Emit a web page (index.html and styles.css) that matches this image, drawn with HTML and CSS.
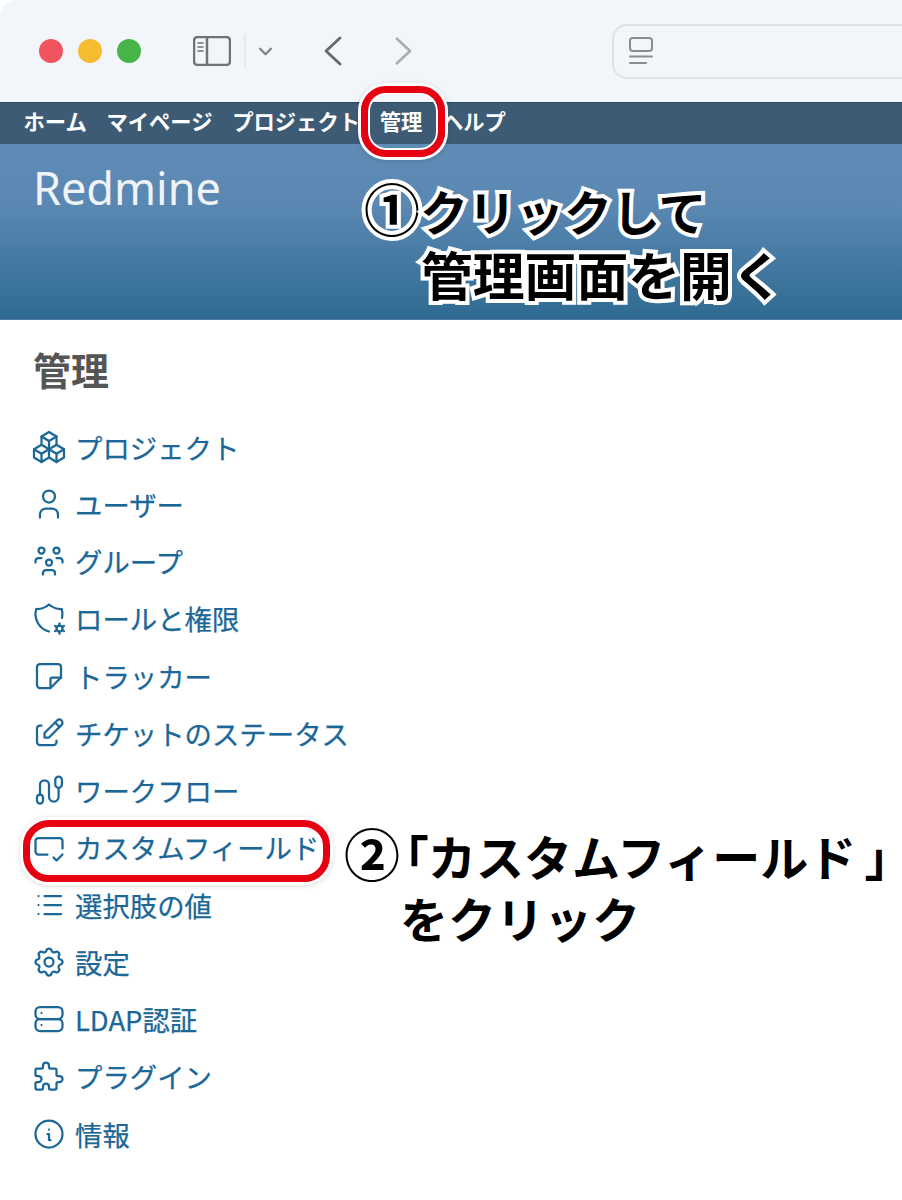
FILE: index.html
```html
<!DOCTYPE html>
<html lang="ja">
<head>
  <meta charset="UTF-8" />
  <meta name="viewport" content="width=device-width, initial-scale=1" />
  <title>Redmine 管理</title>
  <link rel="stylesheet" href="styles.css">
</head>
<body>
  <div class="page">
    <div class="toolbar">
      <div class="lights">
        <span class="light red"></span>
        <span class="light yellow"></span>
        <span class="light green"></span>
      </div>
      <svg class="tb-sidebar" viewBox="0 0 38 30">
        <rect x="1" y="1" width="36" height="28" rx="3.5" />
        <path d="M14 1v28" />
        <path class="thin" d="M5 7h5M5 11h5M5 15h5" />
      </svg>
      <span class="tb-divider"></span>
      <svg class="tb-down" viewBox="0 0 16 10"><path d="M2 2l6 6l6 -6" /></svg>
      <svg class="tb-back" viewBox="0 0 18 30"><path d="M16 2l-14 13l14 13" /></svg>
      <svg class="tb-forward" viewBox="0 0 18 30"><path d="M2 2l14 13l-14 13" /></svg>
      <div class="address">
        <svg class="tb-reader" viewBox="0 0 24 28">
          <rect x="1" y="1" width="22" height="13" rx="3" />
          <path d="M1 19.500h22M1 26h16" />
        </svg>
      </div>
    </div>

    <nav class="top-menu">
      <a>ホーム</a>
      <a>マイページ</a>
      <a>プロジェクト</a>
      <a>管理</a>
      <a>ヘルプ</a>
    </nav>

    <header class="site-header">
      <h1>Redmine</h1>
    </header>

    <main class="content">
      <h2>管理</h2>
      <ul class="admin-menu">
        <li>
          <svg class="icon" viewBox="0 0 24 24"><path d="M7 16.500l-5 -3l5 -3l5 3v5.500l-5 3z" /><path d="M2 13.500v5.500l5 3" /><path d="M7 16.545l5 -3.030" /><path d="M17 16.500l-5 -3l5 -3l5 3v5.500l-5 3z" /><path d="M12 19l5 3" /><path d="M17 16.500l5 -3" /><path d="M12 13.500v-5.500l-5 -3l5 -3l5 3v5.500" /><path d="M7 5.030v5.455" /><path d="M12 8l5 -3" /></svg>
          <span>プロジェクト</span>
        </li>
        <li>
          <svg class="icon" viewBox="0 0 24 24"><path d="M8 7a4 4 0 1 0 8 0a4 4 0 0 0 -8 0" /><path d="M6 21v-2a4 4 0 0 1 4 -4h4a4 4 0 0 1 4 4v2" /></svg>
          <span>ユーザー</span>
        </li>
        <li>
          <svg class="icon" viewBox="0 0 24 24"><path d="M10 13a2 2 0 1 0 4 0a2 2 0 0 0 -4 0" /><path d="M8 21v-1a2 2 0 0 1 2 -2h4a2 2 0 0 1 2 2v1" /><path d="M15 5a2 2 0 1 0 4 0a2 2 0 0 0 -4 0" /><path d="M17 10h2a2 2 0 0 1 2 2v1" /><path d="M5 5a2 2 0 1 0 4 0a2 2 0 0 0 -4 0" /><path d="M3 13v-1a2 2 0 0 1 2 -2h2" /></svg>
          <span>グループ</span>
        </li>
        <li>
          <svg class="icon" viewBox="0 0 24 24"><path d="M12 21a12 12 0 0 1 -8.500 -15a12 12 0 0 0 8.500 -3a12 12 0 0 0 8.500 3c.568 1.933 .635 3.957 .223 5.890" /><path d="M17 19a2 2 0 1 0 4 0a2 2 0 1 0 -4 0" /><path d="M19 15.500v1.500M19 21v1.500M22 17.250l-1.300 .750M17.300 20l-1.300 .750M16 17.250l1.300 .750M20.700 20l1.300 .750" /></svg>
          <span>ロールと権限</span>
        </li>
        <li>
          <svg class="icon" viewBox="0 0 24 24"><path d="M13 20l7 -7" /><path d="M13 20v-6a1 1 0 0 1 1 -1h6v-7a2 2 0 0 0 -2 -2h-12a2 2 0 0 0 -2 2v12a2 2 0 0 0 2 2h7" /></svg>
          <span>トラッカー</span>
        </li>
        <li>
          <svg class="icon" viewBox="0 0 24 24"><path d="M7 7h-1a2 2 0 0 0 -2 2v9a2 2 0 0 0 2 2h9a2 2 0 0 0 2 -2v-1" /><path d="M20.385 6.585a2.100 2.100 0 0 0 -2.970 -2.970l-8.415 8.385v3h3l8.385 -8.415" /><path d="M16 5l3 3" /></svg>
          <span>チケットのステータス</span>
        </li>
        <li>
          <svg class="icon" viewBox="0 0 24 24"><path d="M6 21a2 2 0 0 1 -2 -2v-2a2 2 0 0 1 4 0v2a2 2 0 0 1 -2 2z" /><path d="M6 15v-6.500a3 3 0 0 1 6 0v8a3.200 3.200 0 0 0 6.400 0v-6" /><path d="M18.400 10.500a2.200 2.200 0 0 1 -2.200 -2.200v-3.100a2.200 2.200 0 0 1 4.400 0v3.100a2.200 2.200 0 0 1 -2.200 2.200z" /></svg>
          <span>ワークフロー</span>
        </li>
        <li>
          <svg class="icon" viewBox="0 0 24 24"><path d="M11 17h-6a2 2 0 0 1 -2 -2v-7a2 2 0 0 1 2 -2h14a2 2 0 0 1 2 2v5" /><path d="M15 19l2 2l4 -4" /></svg>
          <span>カスタムフィールド</span>
        </li>
        <li>
          <svg class="icon" viewBox="0 0 24 24"><path d="M9 6h11M9 12h11M9 18h11" /><path d="M5 6v.010M5 12v.010M5 18v.010" /></svg>
          <span>選択肢の値</span>
        </li>
        <li>
          <svg class="icon" viewBox="0 0 24 24"><path d="M10.325 4.317c.426 -1.756 2.924 -1.756 3.350 0a1.724 1.724 0 0 0 2.573 1.066c1.543 -.940 3.310 .826 2.370 2.370a1.724 1.724 0 0 0 1.065 2.572c1.756 .426 1.756 2.924 0 3.350a1.724 1.724 0 0 0 -1.066 2.573c.940 1.543 -.826 3.310 -2.370 2.370a1.724 1.724 0 0 0 -2.572 1.065c-.426 1.756 -2.924 1.756 -3.350 0a1.724 1.724 0 0 0 -2.573 -1.066c-1.543 .940 -3.310 -.826 -2.370 -2.370a1.724 1.724 0 0 0 -1.065 -2.572c-1.756 -.426 -1.756 -2.924 0 -3.350a1.724 1.724 0 0 0 1.066 -2.573c-.940 -1.543 .826 -3.310 2.370 -2.370c1 .608 2.296 .070 2.572 -1.065z" /><path d="M9 12a3 3 0 1 0 6 0a3 3 0 0 0 -6 0" /></svg>
          <span>設定</span>
        </li>
        <li>
          <svg class="icon" viewBox="0 0 24 24"><path d="M3 7a3 3 0 0 1 3 -3h12a3 3 0 0 1 3 3v2a3 3 0 0 1 -3 3h-12a3 3 0 0 1 -3 -3z" /><path d="M3 15a3 3 0 0 1 3 -3h12a3 3 0 0 1 3 3v2a3 3 0 0 1 -3 3h-12a3 3 0 0 1 -3 -3z" /><path d="M7 8v.010M7 16v.010" /></svg>
          <span>LDAP認証</span>
        </li>
        <li>
          <svg class="icon" viewBox="0 0 24 24"><path d="M4 7h3a1 1 0 0 0 1 -1v-1a2 2 0 0 1 4 0v1a1 1 0 0 0 1 1h3a1 1 0 0 1 1 1v3a1 1 0 0 0 1 1h1a2 2 0 0 1 0 4h-1a1 1 0 0 0 -1 1v3a1 1 0 0 1 -1 1h-3a1 1 0 0 1 -1 -1v-1a2 2 0 0 0 -4 0v1a1 1 0 0 1 -1 1h-3a1 1 0 0 1 -1 -1v-3a1 1 0 0 1 1 -1h1a2 2 0 0 0 0 -4h-1a1 1 0 0 1 -1 -1v-3a1 1 0 0 1 1 -1" /></svg>
          <span>プラグイン</span>
        </li>
        <li>
          <svg class="icon" viewBox="0 0 24 24"><path d="M3 12a9 9 0 1 0 18 0a9 9 0 0 0 -18 0" /><path d="M12 9h.010" /><path d="M11 12h1v4h1" /></svg>
          <span>情報</span>
        </li>
      </ul>
    </main>

    <!-- annotations over the screenshot -->
    <div class="ring ring-admin"></div>
    <div class="ring ring-field"></div>
    <p class="note note-one"><span class="num">①</span>クリックして<br><span class="indent">管理画面を開く</span></p>
    <p class="note note-two"><span class="num">②</span><span class="bracket open">「</span>カスタムフィールド<span class="bracket close">」</span><br><span class="indent">をクリック</span></p>
  </div>
</body>
</html>
```

FILE: styles.css
```css
html, body {
  margin: 0;
  padding: 0;
  background: #fff;
}

body {
  font-family: "Noto Sans CJK JP", "Noto Sans", sans-serif;
}

.page {
  position: relative;
  width: 902px;
  height: 1200px;
  overflow: hidden;
}

/* browser chrome */
.toolbar {
  display: flex;
  align-items: center;
  height: 102px;
  box-sizing: border-box;
  padding-left: 39px;
  background: #f2f5fa;
  border-top-left-radius: 16px;
}

.lights {
  display: flex;
  flex: none;
  gap: 15px;
}

.light {
  width: 24px;
  height: 24px;
  border-radius: 50%;
}

.light.red { background: #f0545f; }
.light.yellow { background: #f6bb2f; }
.light.green { background: #46b449; }

.toolbar svg {
  flex: none;
  fill: none;
  stroke-linecap: round;
  stroke-linejoin: round;
}

.tb-sidebar {
  width: 38px;
  height: 30px;
  margin-left: 52px;
  stroke: #6f7375;
  stroke-width: 2.500;
}

.tb-sidebar .thin {
  stroke-width: 1.500;
}

.tb-divider {
  flex: none;
  width: 2px;
  height: 35px;
  margin-left: 13px;
  background: #e6e9ee;
}

.tb-down {
  width: 15px;
  height: 9px;
  margin-left: 12px;
  stroke: #7d8285;
  stroke-width: 2.500;
}

.tb-back {
  width: 18px;
  height: 30px;
  margin-left: 51px;
  stroke: #66696b;
  stroke-width: 2.800;
}

.tb-forward {
  width: 17px;
  height: 30px;
  margin-left: 53px;
  stroke: #a9aeb1;
  stroke-width: 2.800;
}

.address {
  display: flex;
  align-items: center;
  flex: none;
  width: 320px;
  height: 55px;
  box-sizing: border-box;
  margin-left: 200px;
  padding-left: 15px;
  border: 2px solid #dde2e4;
  border-radius: 15px;
}

.tb-reader {
  width: 24px;
  height: 28px;
  stroke: #8a8d8f;
  stroke-width: 2;
}

/* redmine header */
.top-menu {
  display: flex;
  gap: 19.700px;
  align-items: center;
  height: 42px;
  box-sizing: border-box;
  padding: 0 0 6px 23.500px;
  background: #3e5b76;
  border-top: 1px solid #2f4a64;
  color: #fff;
  font-size: 21.300px;
  font-weight: 700;
}

.site-header {
  height: 176px;
  box-sizing: border-box;
  padding: 18px 0 0 33px;
  background: linear-gradient(#5f8cb6, #5a88b2 35%, #2f6a91);
  border-bottom: 1px solid #507aa0;
}

.site-header h1 {
  margin: 0;
  color: #f0f3f7;
  font-family: "Noto Sans", sans-serif;
  font-size: 45px;
  font-weight: 400;
  line-height: 52px;
}

/* admin menu */
.content {
  padding: 22px 0 0 33px;
}

.content h2 {
  margin: 0 0 22px;
  color: #555;
  font-size: 38px;
  font-weight: 700;
  line-height: 54px;
}

.admin-menu {
  margin: 0 0 0 -2px;
  padding: 0;
  list-style: none;
}

.admin-menu li {
  display: flex;
  align-items: center;
  gap: 8px;
  height: 57.250px;
  color: #1b6797;
  font-size: 27.400px;
  -webkit-text-stroke: .25px #1b6797;
}

.icon {
  flex: none;
  width: 36px;
  height: 36px;
  fill: none;
  stroke: #1b6797;
  stroke-width: 1.500;
  stroke-linecap: round;
  stroke-linejoin: round;
}

/* annotations */
.ring {
  position: absolute;
  box-sizing: border-box;
  border: 7px solid #e60012;
  box-shadow: 0 0 0 3px #fff, inset 0 0 0 2px #fff, 0 1px 5px 3px rgba(0, 0, 0, .15);
}

.ring-admin {
  left: 361px;
  top: 86px;
  width: 84px;
  height: 71px;
  border-radius: 25px;
}

.ring-field {
  left: 23px;
  top: 820px;
  width: 307px;
  height: 62px;
  border-radius: 26px;
}

.note {
  position: absolute;
  margin: 0;
  color: #000;
  font-weight: 700;
  white-space: nowrap;
  -webkit-text-stroke: 8px #fff;
  paint-order: stroke fill;
}

.note .num {
  font-size: 56px;
}

.note-one {
  left: 364px;
  top: 175px;
  font-size: 48px;
  line-height: 64px;
}

.note-one .indent {
  margin-left: 57px;
  font-size: 51.800px;
}

.note-two {
  left: 344px;
  top: 821px;
  font-size: 48px;
  line-height: 62px;
}

.bracket {
  font-feature-settings: "palt";
}

.bracket.open {
  margin-left: 4px;
}

.bracket.close {
  margin-left: 9px;
}

.note-two .indent {
  margin-left: 56px;
}
```
